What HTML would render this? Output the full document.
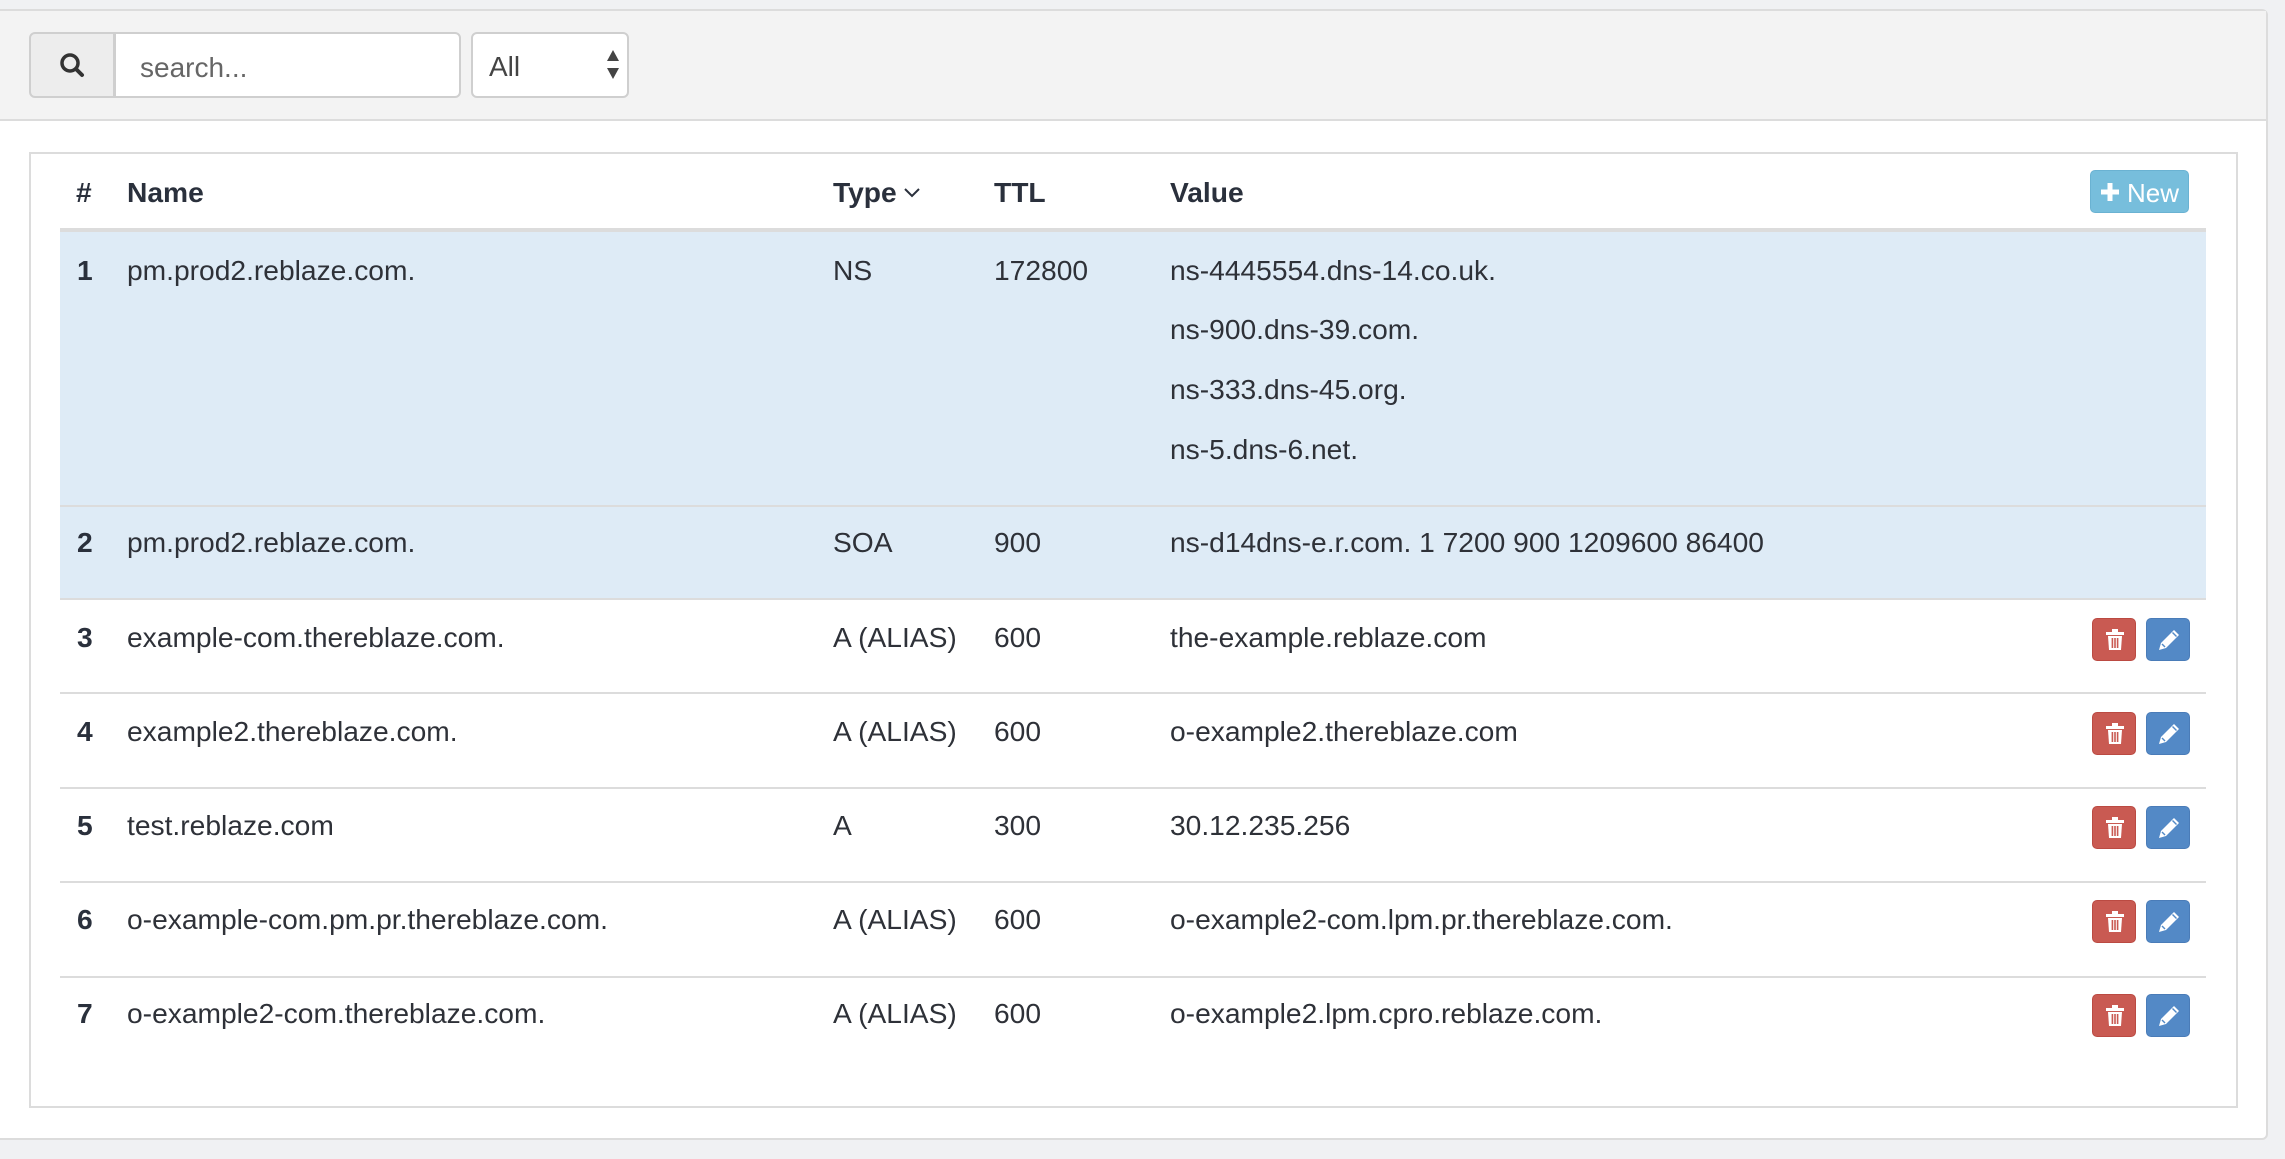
<!DOCTYPE html>
<html><head><meta charset="utf-8"><style>
*{box-sizing:border-box;margin:0;padding:0}
body{width:2285px;height:1159px;background:#f0f1f3;font-family:"Liberation Sans",Arial,sans-serif;position:relative;overflow:hidden;color:#2e3138}
.panel{position:absolute;left:-4px;top:9px;width:2272px;height:1131px;background:#fff;border:2px solid #dcdcdc;border-radius:0 6px 6px 0}
.hdr{position:absolute;left:0;top:0;right:0;height:110px;background:#f3f3f3;border-bottom:2px solid #dcdcdc}
.addon{position:absolute;left:29px;top:32px;width:86px;height:66px;background:#ededed;border:2px solid #cfcfcf;border-radius:6px 0 0 6px}
.inp{position:absolute;left:114px;top:32px;width:347px;height:66px;background:#fff;border:2px solid #cfcfcf;border-radius:0 6px 6px 0;font-size:28px;color:#666;padding:18px 0 0 24px}
.sel{position:absolute;left:471px;top:32px;width:158px;height:66px;background:#fff;border:2px solid #cfcfcf;border-radius:6px;font-size:28px;color:#444;padding:17px 0 0 16px}
.tbox{position:absolute;left:29px;top:152px;width:2209px;height:956px;border:2px solid #dcdcdc;background:#fff}
.t{position:absolute;font-size:28.2px;white-space:nowrap;line-height:30px}
.b{font-weight:bold;color:#2a303c}
.row{position:absolute;left:60px;width:2146px}
.hl{background:#deebf6}
.line{border-top:2px solid #dcdcdc}
.btn{position:absolute;width:44px;height:43px;border-radius:5px}
.del{background:#c95a52;border:1px solid #bb4a42}
.ed{background:#5389c6;border:1px solid #4a7cb8}
.btn svg{position:absolute;left:10px;top:9px}
</style></head><body>
<div class="panel"><div class="hdr"></div></div>
<div class="addon"><svg width="30" height="30" viewBox="0 0 30 30" style="position:absolute;left:26px;top:16px"><circle cx="13" cy="13" r="8" fill="none" stroke="#333" stroke-width="3.5"/><line x1="19" y1="19" x2="25" y2="25" stroke="#333" stroke-width="4" stroke-linecap="round"/></svg></div>
<div class="inp">search...</div>
<div class="sel">All<svg width="16" height="34" viewBox="0 0 16 34" style="position:absolute;right:6px;top:14px"><path d="M8 2 L14 13 L2 13Z M2 20 L14 20 L8 31Z" fill="#444"/></svg></div>
<div class="tbox"></div>
<div class="t b" style="left:76px;top:177px">#</div>
<div class="t b" style="left:127px;top:177px">Name</div>
<div class="t b" style="left:833px;top:177px">Type</div>
<svg width="16" height="10" viewBox="0 0 16 10" style="position:absolute;left:904px;top:188px"><path d="M1 1 L8 8 L15 1" fill="none" stroke="#2a303c" stroke-width="2"/></svg>
<div class="t b" style="left:994px;top:177px">TTL</div>
<div class="t b" style="left:1170px;top:177px">Value</div>
<div style="position:absolute;left:2090px;top:170px;width:99px;height:43px;background:#77bedc;border:1px solid #6ab2d2;border-radius:5px;color:#fff;font-size:26px;white-space:nowrap">
<svg width="20" height="20" viewBox="0 0 20 20" style="position:absolute;left:9px;top:11px"><path d="M10 1 V19 M1 10 H19" stroke="#fff" stroke-width="5"/></svg>
<span style="position:absolute;left:36px;top:7px">New</span></div>
<div class="row" style="top:228px;height:4px;background:#dcdcdc"></div>
<div class="row hl" style="top:232px;height:274px"></div>
<div class="row hl line" style="top:505px;height:94px"></div>
<div class="row line" style="top:598px;height:2px"></div>
<div class="row line" style="top:692px;height:2px"></div>
<div class="row line" style="top:787px;height:2px"></div>
<div class="row line" style="top:881px;height:2px"></div>
<div class="row line" style="top:976px;height:2px"></div>

<div class="t b" style="left:77px;top:255px">1</div>
<div class="t" style="left:127px;top:255px">pm.prod2.reblaze.com.</div>
<div class="t" style="left:833px;top:255px">NS</div>
<div class="t" style="left:994px;top:255px">172800</div>
<div class="t" style="left:1170px;top:255px">ns-4445554.dns-14.co.uk.</div>
<div class="t" style="left:1170px;top:314px">ns-900.dns-39.com.</div>
<div class="t" style="left:1170px;top:374px">ns-333.dns-45.org.</div>
<div class="t" style="left:1170px;top:434px">ns-5.dns-6.net.</div>

<div class="t b" style="left:77px;top:527px">2</div>
<div class="t" style="left:127px;top:527px">pm.prod2.reblaze.com.</div>
<div class="t" style="left:833px;top:527px">SOA</div>
<div class="t" style="left:994px;top:527px">900</div>
<div class="t" style="left:1170px;top:527px">ns-d14dns-e.r.com. 1 7200 900 1209600 86400</div>

<div class="t b" style="left:77px;top:622px">3</div>
<div class="t" style="left:127px;top:622px">example-com.thereblaze.com.</div>
<div class="t" style="left:833px;top:622px">A (ALIAS)</div>
<div class="t" style="left:994px;top:622px">600</div>
<div class="t" style="left:1170px;top:622px">the-example.reblaze.com</div>

<div class="t b" style="left:77px;top:716px">4</div>
<div class="t" style="left:127px;top:716px">example2.thereblaze.com.</div>
<div class="t" style="left:833px;top:716px">A (ALIAS)</div>
<div class="t" style="left:994px;top:716px">600</div>
<div class="t" style="left:1170px;top:716px">o-example2.thereblaze.com</div>

<div class="t b" style="left:77px;top:810px">5</div>
<div class="t" style="left:127px;top:810px">test.reblaze.com</div>
<div class="t" style="left:833px;top:810px">A</div>
<div class="t" style="left:994px;top:810px">300</div>
<div class="t" style="left:1170px;top:810px">30.12.235.256</div>

<div class="t b" style="left:77px;top:904px">6</div>
<div class="t" style="left:127px;top:904px">o-example-com.pm.pr.thereblaze.com.</div>
<div class="t" style="left:833px;top:904px">A (ALIAS)</div>
<div class="t" style="left:994px;top:904px">600</div>
<div class="t" style="left:1170px;top:904px">o-example2-com.lpm.pr.thereblaze.com.</div>

<div class="t b" style="left:77px;top:998px">7</div>
<div class="t" style="left:127px;top:998px">o-example2-com.thereblaze.com.</div>
<div class="t" style="left:833px;top:998px">A (ALIAS)</div>
<div class="t" style="left:994px;top:998px">600</div>
<div class="t" style="left:1170px;top:998px">o-example2.lpm.cpro.reblaze.com.</div>

<svg width="0" height="0" style="position:absolute"><defs>
<symbol id="tr" viewBox="0 0 24 24"><rect x="3" y="4" width="18" height="3" fill="#fff"/><rect x="9" y="1" width="6" height="3" fill="#fff"/><path d="M5 8 H19 L18 22 H6Z" fill="#fff"/><rect x="8.6" y="10" width="1.6" height="10" fill="#c95a52"/><rect x="11.2" y="10" width="1.6" height="10" fill="#c95a52"/><rect x="13.8" y="10" width="1.6" height="10" fill="#c95a52"/></symbol>
<symbol id="pe" viewBox="0 0 24 24"><path d="M17 2 L22 7 L9 20 L2 22 L4 15Z" fill="#fff"/><path d="M15.5 4.5 L19.5 8.5" stroke="#5389c6" stroke-width="1.4"/><path d="M5 16 L8 19" stroke="#5389c6" stroke-width="1.4"/></symbol>
</defs></svg>

<div class="btn del" style="left:2092px;top:618px"><svg width="24" height="24"><use href="#tr"/></svg></div>
<div class="btn ed" style="left:2146px;top:618px"><svg width="24" height="24"><use href="#pe"/></svg></div>
<div class="btn del" style="left:2092px;top:712px"><svg width="24" height="24"><use href="#tr"/></svg></div>
<div class="btn ed" style="left:2146px;top:712px"><svg width="24" height="24"><use href="#pe"/></svg></div>
<div class="btn del" style="left:2092px;top:806px"><svg width="24" height="24"><use href="#tr"/></svg></div>
<div class="btn ed" style="left:2146px;top:806px"><svg width="24" height="24"><use href="#pe"/></svg></div>
<div class="btn del" style="left:2092px;top:900px"><svg width="24" height="24"><use href="#tr"/></svg></div>
<div class="btn ed" style="left:2146px;top:900px"><svg width="24" height="24"><use href="#pe"/></svg></div>
<div class="btn del" style="left:2092px;top:994px"><svg width="24" height="24"><use href="#tr"/></svg></div>
<div class="btn ed" style="left:2146px;top:994px"><svg width="24" height="24"><use href="#pe"/></svg></div>
</body></html>
